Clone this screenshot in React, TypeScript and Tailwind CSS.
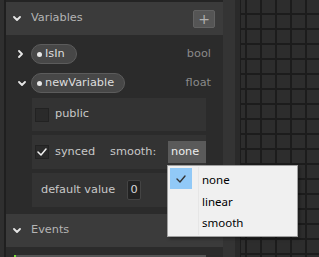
import React from "react";

const Chevron = ({ dir = "down" }: { dir?: "down" | "right" }) =>
  dir === "down" ? (
    <svg width="8" height="5" viewBox="0 0 8 5" fill="none" stroke="#e6e6e6" strokeWidth="1.8" strokeLinecap="round" strokeLinejoin="round">
      <polyline points="1,1 4,4 7,1" />
    </svg>
  ) : (
    <svg width="5" height="8" viewBox="0 0 5 8" fill="none" stroke="#e6e6e6" strokeWidth="1.8" strokeLinecap="round" strokeLinejoin="round">
      <polyline points="1,1 4,4 1,7" />
    </svg>
  );

function SectionHeader({ title, plus }: { title: string; plus?: boolean }) {
  return (
    <div className="flex h-[33px] shrink-0 items-center bg-[#3b3b3b] pl-[7px] pr-[8px]">
      <div className="flex w-[18px] items-center">
        <Chevron />
      </div>
      <span className="text-[#b4b4b4]">{title}</span>
      {plus && (
        <div className="ml-auto flex h-[18px] w-[22px] items-center justify-center rounded-[2px] border border-[#626262] bg-[#555] text-[14px] leading-none text-[#b0b0b0]">
          +
        </div>
      )}
    </div>
  );
}

function VarRow({ name, type, open, width }: { name: string; type: string; open?: boolean; width: number }) {
  return (
    <div className="flex h-[20px] items-center pl-[12px] pr-[12px]">
      <div className="flex w-[13px] items-center">
        <Chevron dir={open ? "down" : "right"} />
      </div>
      <div
        className="flex h-[20px] items-center rounded-full border border-[#5c5c5c] bg-[#474747] pl-[5px]"
        style={{ width }}
      >
        <div className="h-[5px] w-[5px] rounded-full bg-[#e8e8e8]" />
        <span className="ml-[3px] text-[#dedede]">{name}</span>
      </div>
      <span className="ml-auto text-[#8a8a8a]">{type}</span>
    </div>
  );
}

function Checkbox({ checked }: { checked?: boolean }) {
  return (
    <div className="flex h-[14px] w-[14px] items-center justify-center border border-[#222] bg-[#2a2a2a]">
      {checked && (
        <svg width="10" height="8" viewBox="0 0 10 8" fill="none" stroke="#f0f0f0" strokeWidth="1.5" strokeLinecap="round" strokeLinejoin="round">
          <polyline points="1,4 4,7 9,1" />
        </svg>
      )}
    </div>
  );
}

export default function App() {
  return (
    <div className="relative flex h-[257px] w-[319px] overflow-hidden bg-[#2c2c2c] font-['DejaVu_Sans',sans-serif] text-[11.3px]">
      <div className="w-[4px] bg-[#2f2f2f]" />
      <div className="w-[2px] bg-[#1f1f1f]" />

      {/* side panel */}
      <div className="flex w-[217px] flex-col bg-[#2b2b2b]">
        <div className="h-[2px] shrink-0 bg-[#242424]" />
        <SectionHeader title="Variables" plus />

        <div className="flex flex-col pt-[9px]">
          <VarRow name="IsIn" type="bool" width={46} />
          <div className="h-[9px]" />
          <VarRow name="newVariable" type="float" open width={94} />

          <div className="ml-[26px] mr-[17px] mt-[5px] flex flex-col gap-[4px]">
            <div className="flex h-[33px] items-center gap-[6px] bg-[#333] pl-[3px]">
              <Checkbox />
              <span className="text-[#c8c8c8]">public</span>
            </div>
            <div className="flex h-[34px] items-center bg-[#333] pl-[3px]">
              <Checkbox checked />
              <span className="ml-[6px] text-[#c8c8c8]">synced</span>
              <span className="ml-[15px] text-[#c8c8c8]">smooth:</span>
              <div className="ml-auto flex h-[22px] w-[38px] items-center bg-[#5a5a5a] pl-[3px] text-[#ededed]">
                none
              </div>
            </div>
            <div className="flex h-[34px] items-center bg-[#333] pl-[9px]">
              <span className="w-[86px] text-[#c8c8c8]">default value</span>
              <div className="flex h-[20px] w-[14px] items-center justify-center rounded-[2px] border border-[#444] bg-[#222] text-[#d8d8d8]">
                0
              </div>
            </div>
          </div>
        </div>

        <div className="mt-[7px]">
          <SectionHeader title="Events" />
        </div>
        <div className="flex pl-[8px] pt-[8px] pr-[17px]">
          <div className="h-[4px] w-[2px] bg-[#7ae03a]" />
          <div className="h-[4px] flex-1 bg-[#555]" />
        </div>
      </div>

      <div className="w-[12px] bg-[#343434]" />
      <div className="w-[5px] bg-[#2a2a2a]" />
      <div className="w-[1px] bg-[#1c1c1c]" />
      {/* node canvas grid */}
      <div className="flex-1 bg-[#2d2d2d] bg-[linear-gradient(to_right,#1c1c1c_2px,transparent_2px),linear-gradient(to_bottom,#1c1c1c_2px,transparent_2px)] bg-[size:15px_15px] bg-[position:4px_13px]" />

      {/* dropdown menu */}
      <div className="absolute left-[167px] top-[165px] h-[72px] w-[131px] border border-[#a0a0a0] bg-[#f0f0f0] font-['Noto_Sans',sans-serif] text-[11.5px] text-black shadow-[2px_2px_3px_rgba(0,0,0,0.35)]">
        <div className="absolute left-[2px] top-[2px] flex h-[21px] w-[22px] items-center justify-center bg-[#91c9f7]">
          <svg width="10" height="8" viewBox="0 0 10 8" fill="none" stroke="#333" strokeWidth="1.4" strokeLinecap="round" strokeLinejoin="round">
            <polyline points="1,4 4,7 9,1" />
          </svg>
        </div>
        <div className="absolute left-[30px] top-[1px] bottom-[1px] w-[1px] bg-[#e6e6e6]" />
        <div className="flex flex-col pl-[34px] pt-[3px]">
          <div className="flex h-[21.5px] items-center">none</div>
          <div className="flex h-[21.5px] items-center">linear</div>
          <div className="flex h-[21.5px] items-center">smooth</div>
        </div>
      </div>
    </div>
  );
}
